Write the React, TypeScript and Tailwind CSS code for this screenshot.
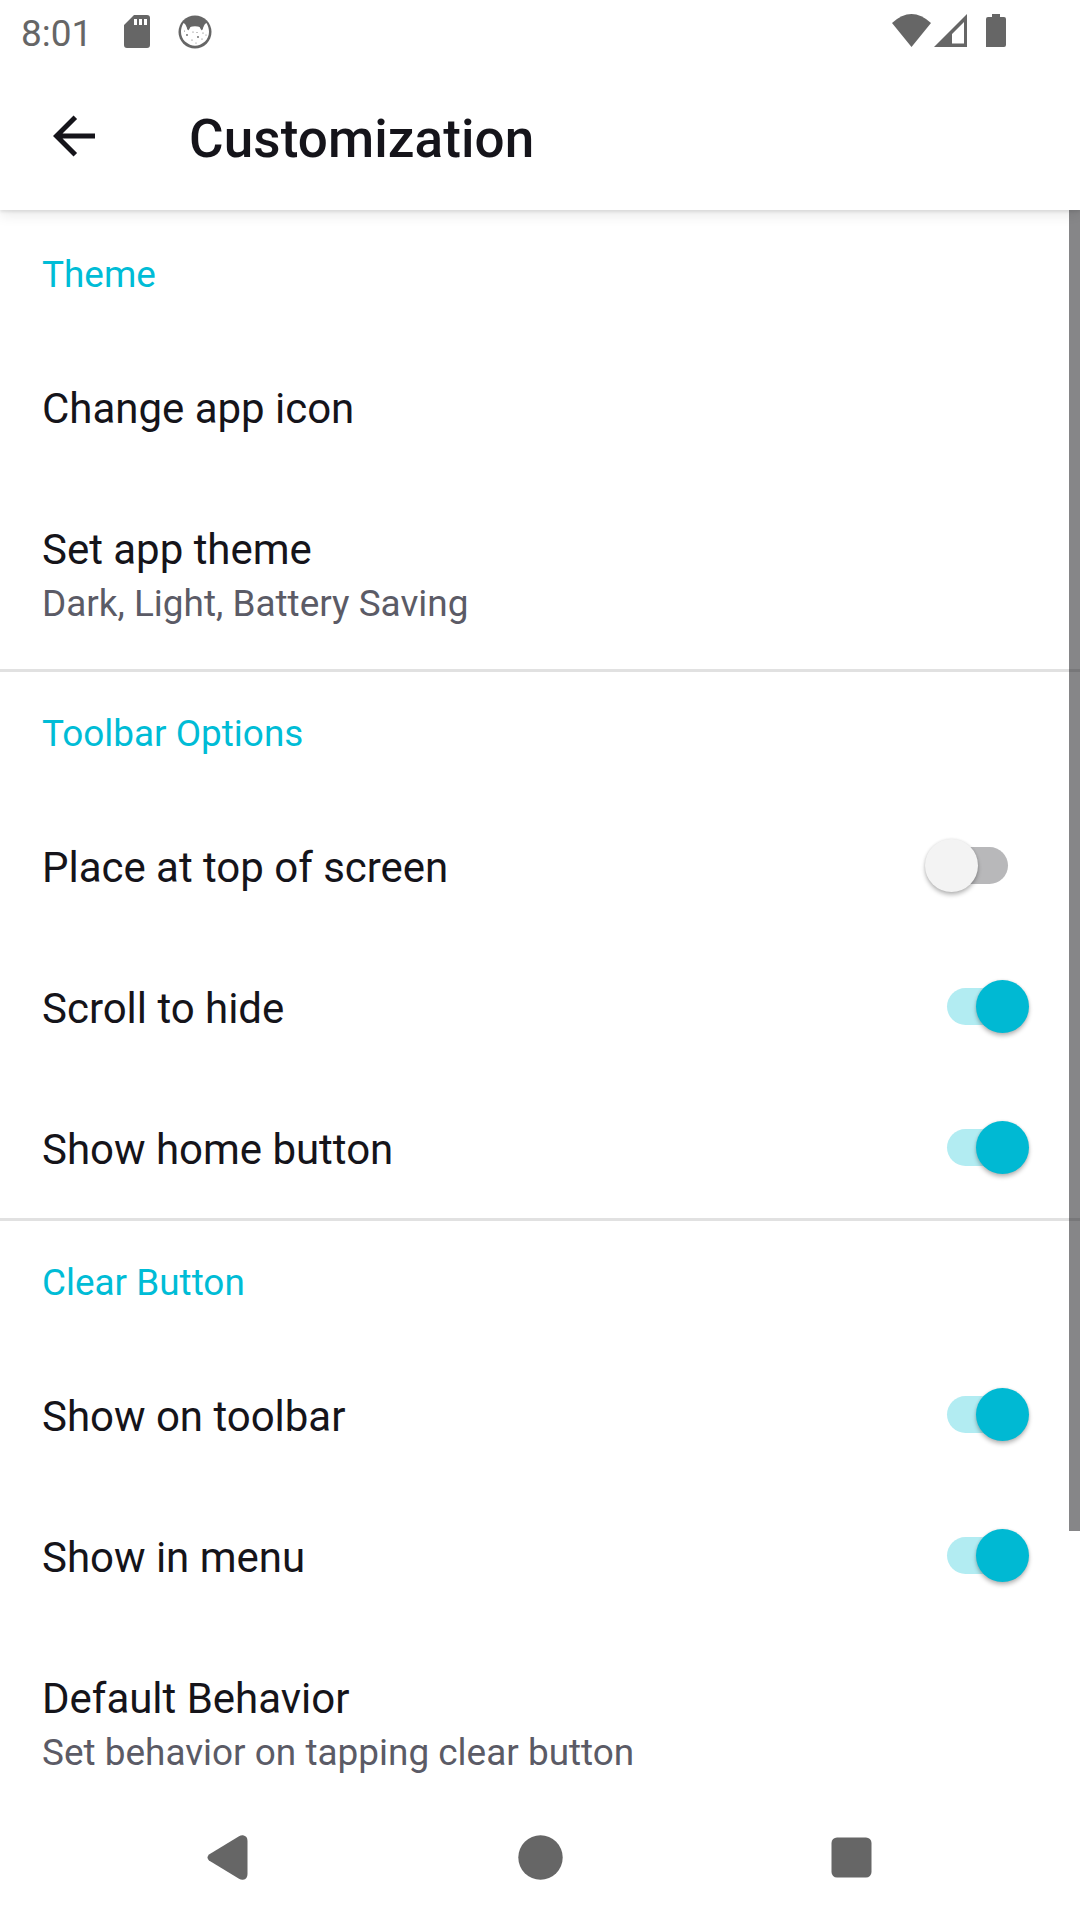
import React from "react";

type RowProps = { title: string; on?: boolean };

function Switch({ on }: { on: boolean }) {
  return (
    <div
      role="switch"
      aria-checked={on}
      className={
        "relative flex h-[53px] w-[103.5px] shrink-0 items-center " + (on ? "justify-end" : "justify-start")
      }
    >
      <div
        className={
          "absolute left-[21.5px] top-2 h-[37px] w-[61.5px] rounded-full " + (on ? "bg-[#b2ecf2]" : "bg-[#b8b8ba]")
        }
      />
      <div
        className={
          "relative size-[52.5px] rounded-full shadow-[0_3px_4px_rgba(0,0,0,0.26),0_0_3px_rgba(0,0,0,0.1)] " +
          (on ? "bg-[#00b9d3]" : "bg-[#f3f3f3]")
        }
      />
    </div>
  );
}

function Heading({ children }: { children: React.ReactNode }) {
  return (
    <h2 className="h-[126px] pl-[42px] pt-[2px] text-[36.9px] leading-[126px] text-[#00bcd6]">{children}</h2>
  );
}

function Row({ title, on }: RowProps) {
  return (
    <div className="flex h-[141px] items-center justify-between pl-[42px] pr-[51.5px]">
      <span className="pt-[4px] text-[42px] leading-[50px] tracking-[-0.02px]">{title}</span>
      {on !== undefined && <Switch on={on} />}
    </div>
  );
}

function DetailRow({ title, summary }: { title: string; summary: string }) {
  return (
    <div className="h-[192px] pl-[42px] pt-[48px]">
      <div className="text-[42px] leading-[50px] tracking-[-0.02px]">{title}</div>
      <div className="mt-[7px] text-[36.93px] leading-[44px] text-[#5b5b66]">{summary}</div>
    </div>
  );
}

export default function App() {
  return (
    <div className="relative flex h-[1920px] w-[1080px] flex-col overflow-hidden bg-white font-['Roboto',sans-serif] text-[#15141a]">
      <div className="relative z-20 flex h-[63px] shrink-0 items-start bg-white text-[#666666]">
        <span className="ml-[21px] mt-[12px] w-[80px] text-[37px] font-[450] leading-[44px]">8:01</span>
        <svg className="ml-[23px] mt-[15px]" width="26" height="33" viewBox="0 0 26 33">
          <path
            fill="currentColor"
            fillRule="evenodd"
            d="M10 0H23Q26 0 26 3V30Q26 33 23 33H3Q0 33 0 30V10ZM10 4V10H13V4ZM15 4V10H18V4ZM20 4V10H23V4Z"
          />
        </svg>
        <svg className="ml-[28px] mt-[15px]" width="34" height="34" viewBox="0 0 34 34">
          <circle cx="17" cy="17" r="16.5" fill="currentColor" />
          <path
            fill="#fff"
            d="M5.500 8Q7 8 8.500 11.500L9.500 15L12 12Q17 10.500 22 12L24.500 15L25.500 11.500Q27 8 28.500 8C32.500 15 31.500 22 27 26.500Q17 35 7 26.500C2.500 22 1.500 15 5.500 8Z"
          />
          <g fill="currentColor">
            <path d="M8.500 11L13 11L10.500 15.500ZM21 11L25.500 11L23.500 15.500Z" />
            <circle cx="9" cy="20" r=".9" />
            <circle cx="15" cy="17" r=".6" />
            <circle cx="20" cy="22" r=".9" />
            <circle cx="25" cy="18" r=".6" />
            <circle cx="14" cy="25" r=".6" />
            <circle cx="18" cy="28" r=".5" />
            <circle cx="24" cy="24" r=".6" />
            <circle cx="6.500" cy="16" r=".5" />
            <circle cx="28" cy="20" r=".5" />
            <circle cx="19" cy="17.500" r=".5" />
          </g>
        </svg>
        <svg className="ml-auto mt-[14px]" width="40" height="33" viewBox="0 0 40 33">
          <path fill="currentColor" d="M0 9Q19.500 -9 39 9L19.500 33Z" />
        </svg>
        <svg className="ml-[2px] mt-[14px]" width="33" height="33" viewBox="0 0 33 33">
          <path fill="currentColor" fillRule="evenodd" d="M33 0V33H0ZM30 8L18 20V29.500H30Z" />
        </svg>
        <svg className="ml-[19px] mr-[74px] mt-[14px]" width="20" height="33" viewBox="0 0 20 33">
          <path fill="currentColor" d="M6 0H14V3H18Q20 3 20 5V31Q20 33 18 33H0V5Q0 3 2 3H6Z" />
        </svg>
      </div>

      <header className="relative z-10 flex h-[147px] shrink-0 items-center bg-white shadow-[0_2px_3px_rgba(0,0,0,0.09),0_6px_12px_rgba(0,0,0,0.08)]">
        <svg className="ml-[53px]" width="42" height="43" viewBox="0 0 42 43">
          <path d="M22.300 2.200L3.500 21L22.300 39.800M4 21H42" fill="none" stroke="currentColor" strokeWidth="5" />
        </svg>
        <h1 className="ml-[94px] pt-[4px] text-[53px] font-medium leading-[62px] tracking-[0.1px]">
          Customization
        </h1>
      </header>

      <main className="h-[1584px] shrink-0 overflow-hidden">
        <section className="h-[459px]">
          <Heading>Theme</Heading>
          <Row title="Change app icon" />
          <DetailRow title="Set app theme" summary="Dark, Light, Battery Saving" />
        </section>
        <section className="h-[549px]">
          <div className="-mb-[3px] h-[3px] bg-[#e1e1e1]" />
          <Heading>Toolbar Options</Heading>
          <Row title="Place at top of screen" on={false} />
          <Row title="Scroll to hide" on />
          <Row title="Show home button" on />
        </section>
        <section>
          <div className="-mb-[3px] h-[3px] bg-[#e1e1e1]" />
          <Heading>Clear Button</Heading>
          <Row title="Show on toolbar" on />
          <Row title="Show in menu" on />
          <DetailRow title="Default Behavior" summary="Set behavior on tapping clear button" />
        </section>
      </main>

      <div className="absolute right-0 top-[210px] z-20 h-[1321px] w-[11px] bg-[rgba(20,20,24,0.515)]" />

      <nav className="flex h-[126px] shrink-0 items-start text-[#666666]">
        <svg className="ml-[207px] mt-[41px]" width="41" height="45" viewBox="0 0 41 45">
          <path
            fill="currentColor"
            d="M2 19.500L32 1.200Q34 0 36 0.200Q40.500 1 40.500 6V39Q40.500 44 36 44.800Q34 45 32 43.800L2 25.500Q-1 22.500 2 19.500Z"
          />
        </svg>
        <svg className="ml-[270px] mt-[41px]" width="45" height="45" viewBox="0 0 45 45">
          <circle cx="22.500" cy="22.500" r="22.200" fill="currentColor" />
        </svg>
        <svg className="ml-[268px] mt-[43px]" width="41" height="41" viewBox="0 0 41 41">
          <rect x=".5" y=".5" width="40" height="40" rx="5.500" fill="currentColor" />
        </svg>
      </nav>
    </div>
  );
}
